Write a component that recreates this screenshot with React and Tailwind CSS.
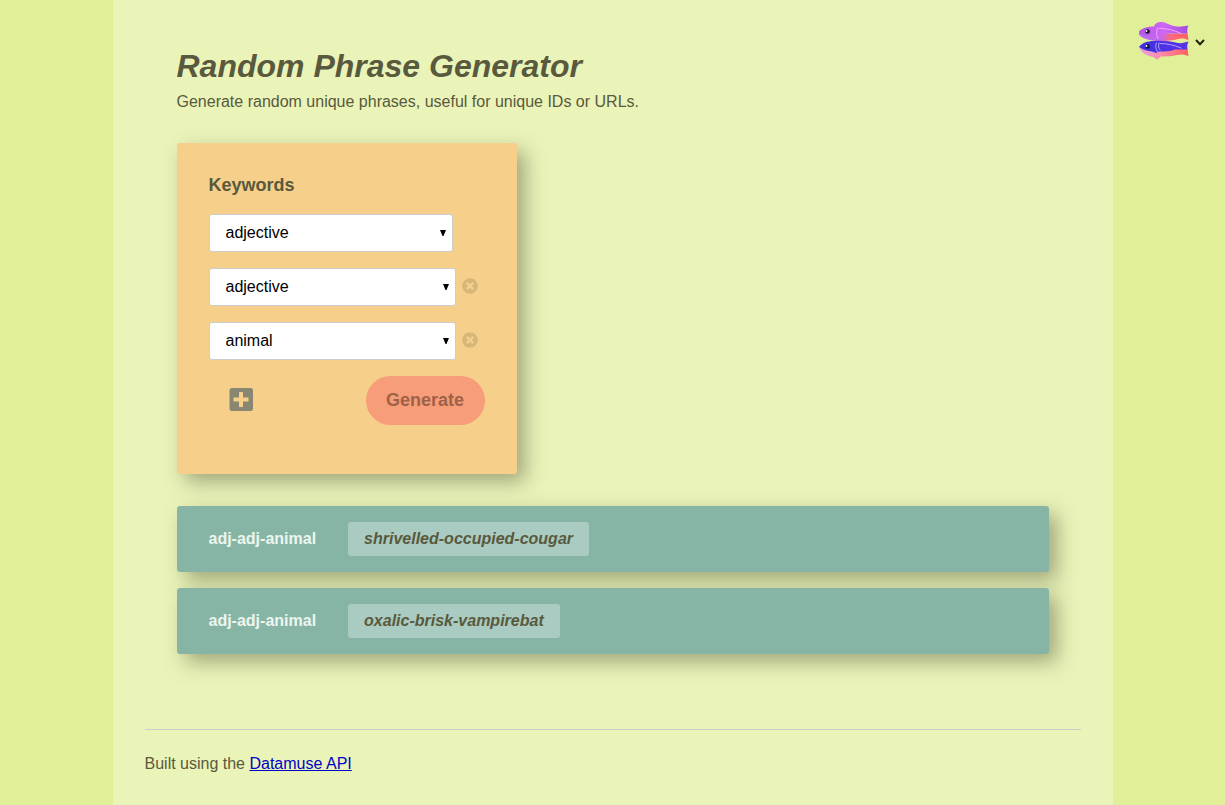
import { useState } from "react";

const KINDS = ["adjective", "adverb", "animal", "noun", "verb"];

function FishLogo() {
  return (
    <svg viewBox="0 0 50 40" className="h-10 w-[50px]" aria-hidden="true">
      <defs>
        <linearGradient id="violet-back" x1="0" x2="1">
          <stop offset="0" stopColor="#b455e6" />
          <stop offset="0.500" stopColor="#cf68f5" />
          <stop offset="1" stopColor="#a04ae0" />
        </linearGradient>
        <linearGradient id="violet-belly" x1="0" x2="1">
          <stop offset="0" stopColor="#b06cf5" />
          <stop offset="0.450" stopColor="#c56ae8" />
          <stop offset="0.650" stopColor="#ff6a78" />
          <stop offset="1" stopColor="#ff5f62" />
        </linearGradient>
        <linearGradient id="blue-back" x1="0" x2="1">
          <stop offset="0" stopColor="#3d2fe0" />
          <stop offset="1" stopColor="#5a35e8" />
        </linearGradient>
        <linearGradient id="blue-belly" x1="0" x2="1">
          <stop offset="0" stopColor="#e7a2dc" />
          <stop offset="0.400" stopColor="#fb8fae" />
          <stop offset="1" stopColor="#ff5f62" />
        </linearGradient>
      </defs>
      <path d="M0 11.500C3 12.500 6 13.500 10 13.500H48.500L49.500 20C46 18.500 43 18 39 19C33 20.800 25 21.500 18 21C10 20.500 3 18.500 0 14.500Z" fill="url(#violet-belly)" />
      <path d="M0 11.500C3 8 8 6.500 15 6.500C16 3 19 1.500 23 2C27 2.300 29 4.500 33 5.500C37 7 42 7 49.500 5.500C48 8 48 11 48.500 13.500H28L20 17.500L11 16.500C6 16 1 14.500 0 11.500Z" fill="url(#violet-back)" />
      <path d="M0 27C4 28 8 29 12 29H48.500L49.500 36C46 34.500 42 34 38 35C33 36.300 28 36.500 22 36.500L18.500 39.500C16 39 15.500 37.500 14 37C8 36 2 33 0 27Z" fill="url(#blue-belly)" />
      <path d="M0 27C3 23 8 21 15 21C23 20.500 32 21.500 39 23C43 23.500 46 22.500 49.500 21.500C48 24 48 27 48.500 29.500H36C31 31.500 26 31.500 20 31.500L17 33C13 30.500 7 32 0 27Z" fill="url(#blue-back)" />
      <path d="M18.500 8C17 12 17.500 15 19 18.500M20 8.500C28 8.500 35 10 42 13.500" fill="none" stroke="#f0a8fa" strokeWidth="1" strokeLinecap="round" />
      <path d="M17.500 23C16 26 17 29 18.500 32M20 23C19 26 19.500 28 21 30M21 23.500C28 23.500 35 25 42 28" fill="none" stroke="#b9a0ff" strokeWidth="1" strokeLinecap="round" />
      <circle cx="8.500" cy="11.500" r="2.300" fill="#10102a" />
      <circle cx="7.500" cy="11" r="0.900" fill="#ffffff" />
      <circle cx="8.500" cy="26.500" r="2.300" fill="#10102a" />
      <circle cx="7.500" cy="26" r="1" fill="#ffffff" />
    </svg>
  );
}

function KeywordRow({ index, value, onChange, onRemove }) {
  return (
    <div className="flex items-center gap-[6px]">
      <div className={onRemove ? "relative w-[247px]" : "relative w-[244px]"}>
        <select
          aria-label={`Keyword ${index + 1}`}
          value={value}
          onChange={(e) => onChange(e.target.value)}
          className="block h-[38px] w-full appearance-none rounded-[3px] border border-[#cccccc] bg-white px-4 text-base text-black"
        >
          {KINDS.map((kind) => (
            <option key={kind}>{kind}</option>
          ))}
        </select>
        <svg viewBox="0 0 6 6" className="pointer-events-none absolute top-4 right-[7px] size-[6px]" aria-hidden="true">
          <path d="M0 0H6L3.500 6H2.500Z" fill="#000000" />
        </svg>
      </div>
      {onRemove && (
        <button type="button" aria-label={`Remove keyword ${index + 1}`} onClick={onRemove} className="pb-[2px] text-[#59593d] opacity-20">
          <svg viewBox="0 0 512 512" className="size-4" fill="currentColor" aria-hidden="true">
            <path d="M256 8C119 8 8 119 8 256s111 248 248 248 248-111 248-248S393 8 256 8zm121.600 313.100c4.700 4.700 4.700 12.300 0 17L338 377.600c-4.700 4.700-12.300 4.700-17 0L256 312l-65.100 65.600c-4.700 4.700-12.300 4.700-17 0L134.400 338c-4.700-4.700-4.700-12.300 0-17l65.600-65-65.600-65.100c-4.700-4.700-4.700-12.300 0-17l39.600-39.600c4.700-4.700 12.300-4.700 17 0l65 65.700 65.100-65.600c4.700-4.700 12.300-4.700 17 0l39.600 39.600c4.700 4.700 4.700 12.300 0 17L312 256l65.600 65.100z" />
          </svg>
        </button>
      )}
    </div>
  );
}

function Result({ pattern, phrase }) {
  return (
    <li className="flex items-center gap-8 rounded-[3px] bg-[#87b5a5] px-8 py-4 font-bold shadow-[8px_8px_20px_rgba(89,89,61,0.5)]">
      <span className="text-[#ecf5ee]">{pattern}</span>
      <em className="rounded-[3px] bg-[#a9cbc1] px-4 py-[5px]">{phrase}</em>
    </li>
  );
}

export default function App() {
  const [keywords, setKeywords] = useState(["adjective", "adjective", "animal"]);
  const update = (i, value) => setKeywords(keywords.map((k, j) => (j === i ? value : k)));
  const remove = (i) => setKeywords(keywords.filter((_, j) => j !== i));

  return (
    <div className="grid min-h-screen grid-cols-[1fr_minmax(0,1000px)_1fr] bg-[#e2ef99] font-['Liberation_Sans',Arial,sans-serif] text-base text-[#59593d]">
      <div />
      <div className="bg-[#eaf4b9] px-8 pt-12">
        <main className="px-8">
          <h1 className="text-[32px] leading-9 font-bold italic">Random Phrase Generator</h1>
          <p className="mt-[6px]">Generate random unique phrases, useful for unique IDs or URLs.</p>

          <form
            onSubmit={(e) => e.preventDefault()}
            className="mt-[29px] w-[340px] max-w-full rounded-[3px] bg-[#f6d08a] px-8 pt-[30px] pb-[49px] shadow-[8px_8px_20px_rgba(89,89,61,0.5)]"
          >
            <h2 className="text-lg leading-6 font-bold">Keywords</h2>
            <div className="mt-[17px] flex flex-col gap-4">
              {keywords.map((keyword, i) => (
                <KeywordRow
                  key={i}
                  index={i}
                  value={keyword}
                  onChange={(value) => update(i, value)}
                  onRemove={i > 0 ? () => remove(i) : undefined}
                />
              ))}
            </div>
            <div className="mt-4 flex items-center justify-between pl-5">
              <button type="button" aria-label="Add keyword" className="pb-[2px]" onClick={() => setKeywords([...keywords, "adjective"])}>
                <svg viewBox="0 0 24 24" className="size-6" aria-hidden="true">
                  <path
                    fillRule="evenodd"
                    d="M3 0H21.500A2.500 2.500 0 0 1 24 2.500V20.500A2.500 2.500 0 0 1 21.500 23H3A2.500 2.500 0 0 1 0.500 20.500V2.500A2.500 2.500 0 0 1 3 0ZM10.500 4Q10 4 10 4.500V9.500H5Q4.500 9.500 4.500 10V13Q4.500 13.500 5 13.500H10V18.500Q10 19 10.500 19H13.500Q14 19 14 18.500V13.500H19Q19.500 13.500 19.500 13V10Q19.500 9.500 19 9.500H14V4.500Q14 4 13.500 4Z"
                    fill="#898771"
                  />
                </svg>
              </button>
              <button type="submit" className="h-[49px] w-[119px] rounded-full bg-[#f79d79] pb-[2px] text-lg font-bold text-[#a06149]">
                Generate
              </button>
            </div>
          </form>

          <ul className="mt-8 flex flex-col gap-4">
            <Result pattern="adj-adj-animal" phrase="shrivelled-occupied-cougar" />
            <Result pattern="adj-adj-animal" phrase="oxalic-brisk-vampirebat" />
          </ul>
        </main>

        <footer className="mt-[75px] border-t border-[#cccccc] pt-[22px] pb-[30px]">
          Built using the{" "}
          <a href="https://www.datamuse.com/api/" className="text-[#0000cc] underline">
            Datamuse API
          </a>
        </footer>
      </div>
      <div className="flex items-start justify-end pt-5 pr-5">
        <button type="button" aria-label="Open menu" className="flex items-center gap-[6px]">
          <FishLogo />
          <svg viewBox="0 0 10 7" className="mt-1 h-[7px] w-[10px]" aria-hidden="true">
            <path d="M1 1L5 5.200L9 1" fill="none" stroke="#22220f" strokeWidth="2" />
          </svg>
        </button>
      </div>
    </div>
  );
}
